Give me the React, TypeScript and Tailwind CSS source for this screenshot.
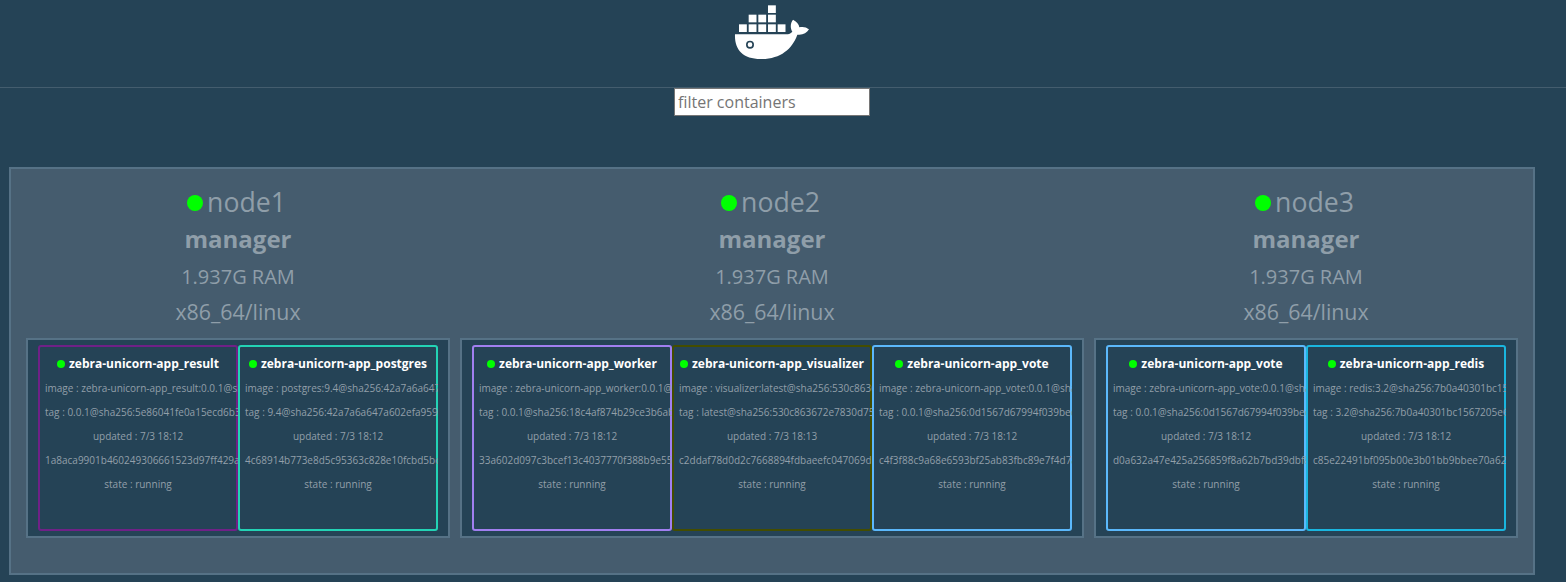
type Task = {
  name: string;
  border: string;
  image: string;
  tag: string;
  updated: string;
  id: string;
};

type Node = { name: string; tasks: Task[] };

const nodes: Node[] = [
  {
    name: "node1",
    tasks: [
      { name: "zebra-unicorn-app_result", border: "border-[#702187]", image: "zebra-unicorn-app_result:0.0.1@sha256:5e86041fe0a1", tag: "0.0.1@sha256:5e86041fe0a15ecd6b3", updated: "7/3 18:12", id: "1a8aca9901b460249306661523d97ff429a" },
      { name: "zebra-unicorn-app_postgres", border: "border-[#23d3b5]", image: "postgres:9.4@sha256:42a7a6a647a602efa959", tag: "9.4@sha256:42a7a6a647a602efa959", updated: "7/3 18:12", id: "4c68914b773e8d5c95363c828e10fcbd5bc" },
    ],
  },
  {
    name: "node2",
    tasks: [
      { name: "zebra-unicorn-app_worker", border: "border-[#a17ff0]", image: "zebra-unicorn-app_worker:0.0.1@sha256:18c4af87", tag: "0.0.1@sha256:18c4af874b29ce3b6ab", updated: "7/3 18:12", id: "33a602d097c3bcef13c4037770f388b9e55" },
      { name: "zebra-unicorn-app_visualizer", border: "border-[#444d00]", image: "visualizer:latest@sha256:530c863672e7830d75", tag: "latest@sha256:530c863672e7830d75", updated: "7/3 18:13", id: "c2ddaf78d0d2c7668894fdbaeefc047069d" },
      { name: "zebra-unicorn-app_vote", border: "border-[#5bb8fb]", image: "zebra-unicorn-app_vote:0.0.1@sha256:0d1567d6", tag: "0.0.1@sha256:0d1567d67994f039bee", updated: "7/3 18:12", id: "c4f3f88c9a68e6593bf25ab83fbc89e7f4d7a" },
    ],
  },
  {
    name: "node3",
    tasks: [
      { name: "zebra-unicorn-app_vote", border: "border-[#5bb8fb]", image: "zebra-unicorn-app_vote:0.0.1@sha256:0d1567d6", tag: "0.0.1@sha256:0d1567d67994f039bee", updated: "7/3 18:12", id: "d0a632a47e425a256859f8a62b7bd39dbf8" },
      { name: "zebra-unicorn-app_redis", border: "border-[#1ab6df]", image: "redis:3.2@sha256:7b0a40301bc1567205e6", tag: "3.2@sha256:7b0a40301bc1567205e6", updated: "7/3 18:12", id: "c85e22491bf095b00e3b01bb9bbee70a62a" },
    ],
  },
];

const crates = [
  [144, 16],
  [86, 44], [115, 44], [144, 44],
  [57, 73], [86, 73], [115, 73], [144, 73], [173, 73],
];

function Logo() {
  return (
    <svg className="h-[70px] w-[100px]" viewBox="0 0 300 210" fill="#fff">
      {crates.map(([x, y]) => (
        <rect key={`${x}-${y}`} x={x} y={y} width="23.5" height="23" />
      ))}
      <path d="M45 103 H198 C207 103 213 100 217 95 C210 84 211 69 219 59 C229 64 237 72 238 82 C248 79 259 81 267 88 C260 100 248 106 232 104 C216 148 181 177 122 177 C68 177 43 148 45 103 Z" />
      <circle cx="90" cy="134" r="9.5" fill="#fff" stroke="#254356" strokeWidth="5" />
    </svg>
  );
}

function TaskCard({ task }: { task: Task }) {
  return (
    <article className={`h-[186px] w-[200px] shrink-0 rounded-[3px] border-2 ${task.border}`}>
      <div className="-mr-0.5 overflow-hidden pt-[5px] pl-[5px] text-[10px] leading-6 whitespace-nowrap text-[#929fa9]">
        <h3 className="flex w-[186px] items-center justify-center gap-1 text-xs leading-6 font-bold text-white">
          <span className="size-2 shrink-0 rounded-full bg-[#00ff00]" />
          {task.name}
        </h3>
        <p>image : {task.image}</p>
        <p>tag : {task.tag}</p>
        <p className="w-[186px] text-center">updated : {task.updated}</p>
        <p>{task.id}</p>
        <p className="w-[186px] text-center">state : running</p>
      </div>
    </article>
  );
}

function NodeColumn({ node }: { node: Node }) {
  return (
    <section className="flex flex-col">
      <header className="flex h-[155px] flex-col items-center text-[#8f9ea9]">
        <h1 className="flex h-10 items-center gap-1 pr-[3px] text-[26.67px] leading-10">
          <span className="size-4 rounded-full bg-[#00ff00]" />
          <span className="pb-0.5">{node.name}</span>
        </h1>
        <h2 className="text-2xl leading-8 font-bold">manager</h2>
        <p className="mt-1 text-xl leading-9">1.937G RAM</p>
        <p className="text-[21.33px] leading-[34px]">x86_64/linux</p>
      </header>
      <div className="flex h-[200px] border-2 border-[#567286] bg-[#254356] px-2.5 pt-[5px]">
        {node.tasks.map((task) => (
          <TaskCard key={task.name} task={task} />
        ))}
      </div>
    </section>
  );
}

export default function App() {
  return (
    <div className="h-[582px] w-full overflow-hidden bg-[#254356] font-['Open_Sans',sans-serif]">
      <div className="flex h-[88px] justify-center border-b border-[#445d6e] pr-[26px]">
        <Logo />
      </div>
      <div className="flex h-[79px] items-start justify-center pr-[22px]">
        <input
          className="h-7 w-[196px] border border-[#767676] bg-white px-[3px] text-base placeholder:text-[#757575]"
          placeholder="filter containers"
        />
      </div>
      <main className="ml-[9px] flex h-[408px] w-[1526px] gap-2.5 border-2 border-[#567286] bg-[#455c6e] pt-3.5 pl-[15px]">
        {nodes.map((node) => (
          <NodeColumn key={node.name} node={node} />
        ))}
      </main>
    </div>
  );
}
